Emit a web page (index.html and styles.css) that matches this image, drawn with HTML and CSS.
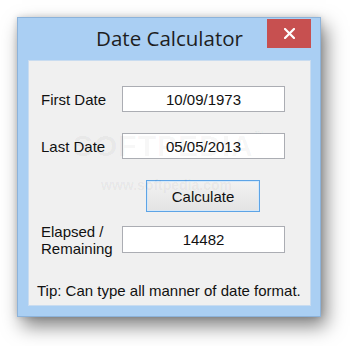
FILE: index.html
```html
<!DOCTYPE html>
<html lang="en">
<head>
  <meta charset="utf-8" />
  <title>Date Calculator</title>
  <link rel="stylesheet" href="styles.css">
</head>
<body>
  <div class="window">
    <div class="titlebar">
      <span class="title">Date Calculator</span>
      <button class="close-btn">
        <svg width="11" height="11" viewBox="0 0 11 11">
          <path d="M1 1 L10 10 M10 1 L1 10" stroke="#fff" stroke-width="2.2" stroke-linecap="square" />
        </svg>
      </button>
    </div>

    <div class="client">
      <div class="row">
        <label class="label">First Date</label>
        <div class="field">10/09/1973</div>
      </div>
      <div class="row">
        <label class="label">Last Date</label>
        <div class="field">05/05/2013</div>
      </div>
      <div class="btn-row">
        <button class="calc-btn">Calculate</button>
      </div>
      <div class="row row-result">
        <label class="label">Elapsed /<br>Remaining</label>
        <div class="field field-result">14482</div>
      </div>
      <p class="tip">Tip: Can type all manner of date format.</p>

      <!-- watermark -->
      <span class="wm-big">SOFTPEDIA<sup>™</sup></span>
      <span class="wm-small">www.softpedia.com</span>
    </div>
  </div>
</body>
</html>
```

FILE: styles.css
```css
:root {
  --frame: #aacff3;
  --frame-line: #8db3da;
  --client: #f0f0f0;
  --close: #c75050;
  --field-border: #abadb3;
  --text: #111;
}

*, *::before, *::after {
  box-sizing: border-box;
  margin: 0;
  padding: 0;
}

body {
  background: #fff;
  font-family: 'Liberation Sans', Arial, sans-serif;
  color: var(--text);
  width: 350px;
  height: 346px;
  overflow: hidden;
}

.window {
  margin: 17px 0 0 17px;
  width: 304px;
  height: 300px;
  background: var(--frame);
  border: 1px solid var(--frame-line);
  box-shadow: 5px 9px 18px rgba(0, 0, 0, 0.5), 0 0 6px rgba(0, 0, 0, 0.15);
  display: flex;
  flex-direction: column;
  padding: 0 9px 10px 10px;
}

/* Title bar */
.titlebar {
  height: 42px;
  position: relative;
  display: flex;
  align-items: center;
  justify-content: center;
}

.title {
  font-family: 'Open Sans', 'Noto Sans', sans-serif;
  font-size: 20.5px;
  color: #1e1e1e;
  margin-top: -2px;
}

.close-btn {
  position: absolute;
  top: 1px;
  right: 0;
  width: 44px;
  height: 29px;
  background: var(--close);
  border: none;
  display: flex;
  align-items: center;
  justify-content: center;
}

/* Client area */
.client {
  flex: 1;
  background: var(--client);
  border: 1px solid #c9dcf0;
  padding: 25px 0 0 12px;
  position: relative;
  overflow: hidden;
}

.row {
  display: flex;
  align-items: center;
  height: 26px;
  margin-bottom: 21px;
}

.label {
  width: 81px;
  font-size: 15px;
  line-height: 17px;
}

.field {
  width: 163px;
  height: 26px;
  background: #fff;
  border: 1px solid var(--field-border);
  font-size: 15px;
  display: flex;
  align-items: center;
  justify-content: center;
}

.btn-row {
  margin: 1px 0 14px 105px;
}

.calc-btn {
  width: 114px;
  height: 32px;
  font-family: inherit;
  font-size: 15px;
  color: var(--text);
  background: linear-gradient(#f2f2f2, #e3e3e3);
  border: 1px solid #5da4e6;
  box-shadow: inset 0 0 0 1px #d6e8f8;
}

.row-result {
  height: 27px;
  margin-bottom: 0;
}

.field-result {
  height: 27px;
}

.tip {
  font-size: 15px;
  margin: 29px 0 0 -4px;
  letter-spacing: 0;
}

.wm-big {
  position: absolute;
  left: 44px;
  top: 68px;
  font-size: 30px;
  font-weight: bold;
  letter-spacing: 1px;
  color: rgba(0, 0, 0, 0.04);
  pointer-events: none;
}

.wm-big sup {
  font-size: 10px;
  vertical-align: top;
}

.wm-small {
  position: absolute;
  left: 72px;
  top: 116px;
  font-size: 14px;
  font-weight: bold;
  color: rgba(0, 0, 0, 0.05);
  pointer-events: none;
}
```
